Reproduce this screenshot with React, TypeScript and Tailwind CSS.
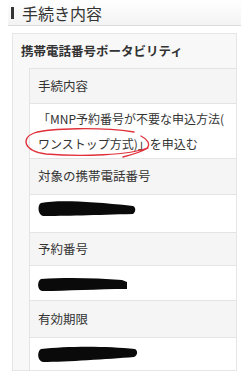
import React from "react";

const font = { fontFamily: '"Noto Sans CJK JP", "Noto Sans", sans-serif' };

function Brush({ d, w, h, className }: { d: string; w: number; h: number; className?: string }) {
  return (
    <svg width={w} height={h} viewBox={`0 0 ${w} ${h}`} className={className}>
      <path d={d} fill="#0a0a0a" />
    </svg>
  );
}

function LabelRow({ label, h }: { label: string; h: string }) {
  return (
    <div className={`flex items-center border-t border-[#e4e4e4] bg-[#f5f5f5] pl-2 text-[12.5px] text-[#333] ${h}`}>
      {label}
    </div>
  );
}

export default function App() {
  return (
    <div style={font} className="w-[249px] h-[380px] overflow-hidden bg-white text-[#333]">
      <div className="mx-2 flex h-[26px] items-center gap-2 border-b border-[#dcdcdc] bg-gradient-to-b from-white to-[#f3f3f3] pl-[3px]">
        <span className="h-[12px] w-[3px] bg-[#333]" />
        <span className="text-[16px] leading-none">手続き内容</span>
      </div>

      <div className="mx-3 mt-[7px] border border-[#e6e6e6] bg-[#f8f8f8]">
        <div className="flex h-[34px] items-center pl-2 text-[12.5px] font-bold">
          携帯電話番号ポータビリティ
        </div>
        <div className="ml-4 border-l border-[#e4e4e4] bg-white">
          <LabelRow label="手続内容" h="h-[35px]" />
          <div className="relative flex h-[55px] items-center border-t border-[#e4e4e4] pl-2 pr-1 text-[12px] leading-[25px]">
            <p>
              「MNP予約番号が不要な申込方法(
              <br />
              ワンストップ方式)」を申込む
            </p>
            <svg
              width="135"
              height="40"
              viewBox="0 0 135 40"
              className="pointer-events-none absolute left-[-9px] top-[19px]"
            >
              <path
                d="M113 9 C80 4 30 5 13 10 C0 15 2 28 25 31 C60 34 110 32 126 25 C130 21 126 16 120 13 M127 25 C120 29 110 32 102 34"
                fill="none"
                stroke="#e0303a"
                strokeWidth="1.3"
                strokeLinecap="round"
              />
            </svg>
          </div>
          <LabelRow label="対象の携帯電話番号" h="h-[36px]" />
          <div className="flex h-[38px] items-start border-t border-[#e4e4e4] pl-[7px]">
            <Brush
              w={100}
              h={20}
              className="mt-[3px]"
              d="M4 5 C20 2 50 3 96 8 C99 9 99 14 96 16 C60 17 25 18 6 18 C1 17 0 7 4 5 Z"
            />
          </div>
          <LabelRow label="予約番号" h="h-[33px]" />
          <div className="flex h-[35px] items-start border-t border-[#e4e4e4] pl-[7px]">
            <Brush
              w={92}
              h={17}
              className="mt-[10px]"
              d="M4 3 C30 1 60 2 85 4 L90 6 L90 13 C60 13 30 15 5 15 C0 14 0 5 4 3 Z"
            />
          </div>
          <LabelRow label="有効期限" h="h-[37px]" />
          <div className="flex h-[33px] items-start border-t border-[#e4e4e4] pl-[7px]">
            <Brush
              w={102}
              h={19}
              className="mt-[7px]"
              d="M4 4 C30 1 70 1 98 4 C101 6 101 10 97 12 C70 14 30 17 6 17 C0 16 0 6 4 4 Z"
            />
          </div>
        </div>
      </div>
    </div>
  );
}
